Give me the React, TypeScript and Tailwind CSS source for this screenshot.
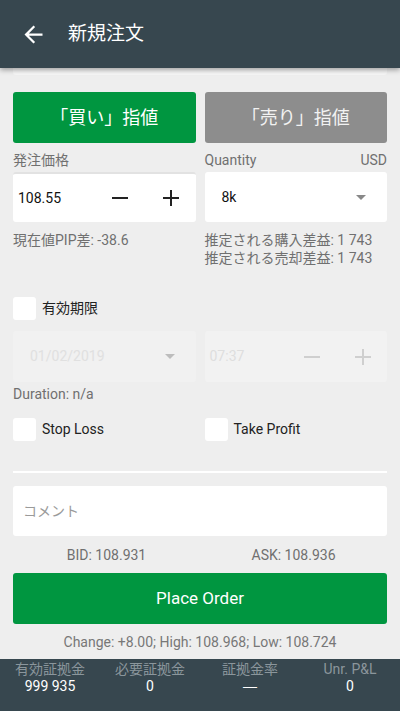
import { ReactNode } from "react";

const font = { fontFamily: '"Roboto", "Noto Sans CJK JP", sans-serif' };

function Minus({ className }: { className?: string }) {
  return (
    <svg viewBox="0 0 16 16" className={className} width="16" height="16">
      <path d="M0 8h16" stroke="currentColor" strokeWidth="2" />
    </svg>
  );
}

function Plus({ className }: { className?: string }) {
  return (
    <svg viewBox="0 0 16 16" className={className} width="16" height="16">
      <path d="M0 8h16M8 0v16" stroke="currentColor" strokeWidth="2" />
    </svg>
  );
}

function Caret({ className }: { className?: string }) {
  return (
    <svg viewBox="0 0 10 5" className={className} width="10" height="5">
      <path d="M0 0h10L5 5z" fill="currentColor" />
    </svg>
  );
}

function Check({ label }: { label: ReactNode }) {
  return (
    <label className="flex items-center gap-[6px] text-[14px] text-[#222]">
      <span className="h-[23px] w-[23px] rounded-[3px] bg-white" />
      {label}
    </label>
  );
}

const stats = [
  { label: "有効証拠金", value: "999 935" },
  { label: "必要証拠金", value: "0" },
  { label: "証拠金率", value: "—" },
  { label: "Unr. P&L", value: "0" },
];

export default function App() {
  return (
    <div className="flex h-[711px] w-[400px] flex-col overflow-hidden bg-[#eeeeee]" style={font}>
      {/* header */}
      <header className="relative z-10 flex h-[68px] shrink-0 items-center bg-[#37474f] shadow-[0_2px_5px_rgba(0,0,0,0.35)]">
        <svg viewBox="0 0 24 24" width="27" height="27" className="ml-[20px] text-white">
          <path
            d="M20 11H7.83l5.59-5.59L12 4l-8 8 8 8 1.41-1.41L7.83 13H20v-2z"
            fill="currentColor"
          />
        </svg>
        <h1 className="ml-[21px] text-[19px] text-white">新規注文</h1>
      </header>

      <main className="flex flex-1 flex-col px-[13px]">
        {/* card edge scrolled under the header */}
        <div className="h-[7px] rounded-b-[3px] bg-[#f6f6f6]" />

        {/* order type */}
        <div className="mt-[17px] grid grid-cols-2 gap-[9px]">
          <button className="h-[51px] rounded-[3px] bg-[#009640] text-[18px] text-white">
            「買い」指値
          </button>
          <button className="h-[51px] rounded-[3px] bg-[#8d8d8d] text-[18px] text-[#f2f2f2]">
            「売り」指値
          </button>
        </div>

        {/* price / quantity */}
        <div className="grid grid-cols-2 gap-[9px]">
          <div>
            <div className="pt-[8px] pb-[3px] text-[14px] leading-[18px] text-[#707070]">発注価格</div>
            <div className="flex h-[50px] items-center rounded-[3px] border-t-2 border-[#e2e2e2] bg-white">
              <span className="ml-[5px] w-[94px] text-[14px] text-[#111]">108.55</span>
              <Minus className="text-[#222]" />
              <Plus className="ml-[35px] text-[#222]" />
            </div>
            <div className="mt-[9px] text-[14px] leading-[18px] text-[#707070]">現在値PIP差: -38.6</div>
          </div>
          <div>
            <div className="flex justify-between pt-[8px] pb-[3px] text-[14px] leading-[18px] text-[#707070]">
              <span>Quantity</span>
              <span>USD</span>
            </div>
            <div className="flex h-[50px] items-center justify-between rounded-[3px] bg-white pr-[21px] pl-[17px]">
              <span className="text-[14px] text-[#111]">8k</span>
              <Caret className="text-[#888]" />
            </div>
            <div className="mt-[9px] text-[14px] leading-[18px] text-[#707070]">
              <div>推定される購入差益: 1 743</div>
              <div>推定される売却差益: 1 743</div>
            </div>
          </div>
        </div>

        {/* expiry */}
        <div className="mt-[30px]">
          <Check label="有効期限" />
        </div>
        <div className="mt-[11px] grid grid-cols-2 gap-[9px]">
          <div className="flex h-[51px] items-center justify-between rounded-[3px] bg-[#f1f1f1] pr-[21px] pl-[17px]">
            <span className="text-[14px] text-[#e0e0e0]">01/02/2019</span>
            <Caret className="text-[#bdbdbd]" />
          </div>
          <div className="flex h-[51px] items-center rounded-[3px] bg-[#f2f2f2]">
            <span className="ml-[5px] w-[94px] text-[14px] text-[#dedede]">07:37</span>
            <Minus className="text-[#cfcfcf]" />
            <Plus className="ml-[35px] text-[#cfcfcf]" />
          </div>
        </div>
        <div className="mt-[3px] text-[14px] leading-[18px] text-[#707070]">Duration: n/a</div>

        {/* risk */}
        <div className="mt-[15px] grid grid-cols-2 gap-[9px]">
          <Check label="Stop Loss" />
          <Check label="Take Profit" />
        </div>

        <hr className="mt-[30px] border-0 border-t-2 border-white" />

        <div className="mt-[13px] flex h-[50px] items-center rounded-[3px] bg-white px-[10px] text-[14px] text-[#9a9a9a]">
          コメント
        </div>

        <div className="mt-[10px] grid grid-cols-2 text-center text-[14px] leading-[18px] text-[#707070]">
          <span>BID: 108.931</span>
          <span>ASK: 108.936</span>
        </div>

        <button className="mt-[9px] h-[51px] rounded-[3px] bg-[#009640] text-[17px] text-white">
          Place Order
        </button>

        <p className="mt-[9px] text-center text-[14px] leading-[18px] text-[#777]">
          Change: +8.00; High: 108.968; Low: 108.724
        </p>
      </main>

      {/* footer stats */}
      <footer className="grid h-[52px] shrink-0 grid-cols-4 bg-[#37474f] pt-[2px] text-center text-[14px] leading-[17px]">
        {stats.map((s) => (
          <div key={s.label}>
            <div className="text-[#8b969c]">{s.label}</div>
            <div className="text-white" style={s.value === "—" ? { fontFamily: '"Liberation Sans", sans-serif' } : undefined}>
              {s.value}
            </div>
          </div>
        ))}
      </footer>
    </div>
  );
}
